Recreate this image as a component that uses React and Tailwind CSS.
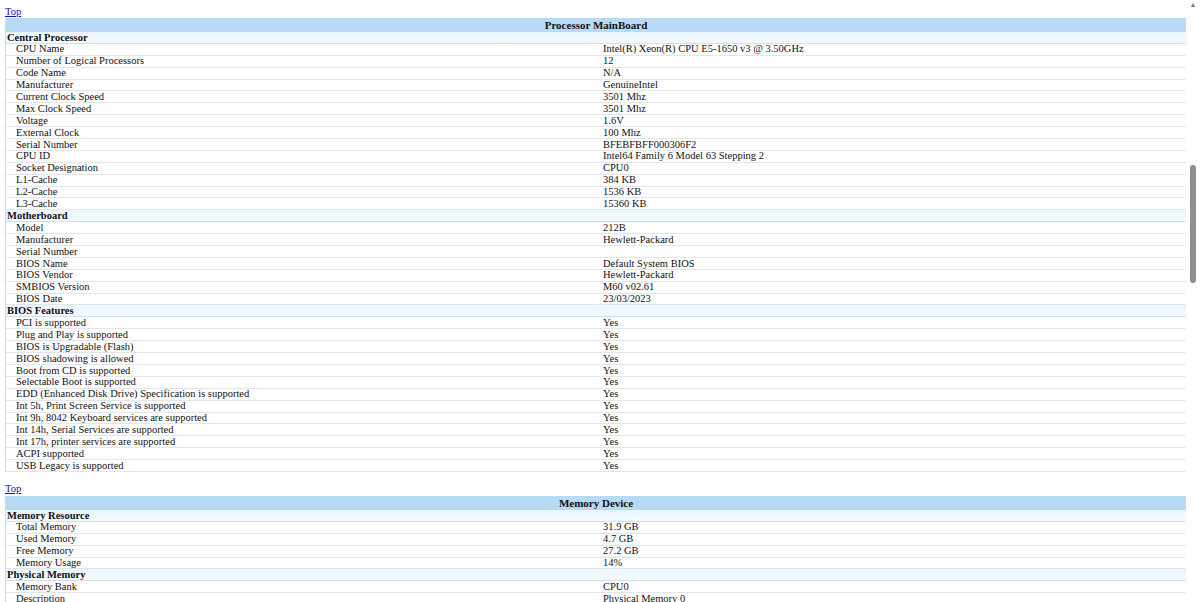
const sections1 = [
  ["Central Processor", [
    ["CPU Name","Intel(R) Xeon(R) CPU E5-1650 v3 @ 3.50GHz"],
    ["Number of Logical Processors","12"],
    ["Code Name","N/A"],
    ["Manufacturer","GenuineIntel"],
    ["Current Clock Speed","3501 Mhz"],
    ["Max Clock Speed","3501 Mhz"],
    ["Voltage","1.6V"],
    ["External Clock","100 Mhz"],
    ["Serial Number","BFEBFBFF000306F2"],
    ["CPU ID","Intel64 Family 6 Model 63 Stepping 2"],
    ["Socket Designation","CPU0"],
    ["L1-Cache","384 KB"],
    ["L2-Cache","1536 KB"],
    ["L3-Cache","15360 KB"],
  ]],
  ["Motherboard", [
    ["Model","212B"],
    ["Manufacturer","Hewlett-Packard"],
    ["Serial Number",""],
    ["BIOS Name","Default System BIOS"],
    ["BIOS Vendor","Hewlett-Packard"],
    ["SMBIOS Version","M60 v02.61"],
    ["BIOS Date","23/03/2023"],
  ]],
  ["BIOS Features", [
    ["PCI is supported","Yes"],
    ["Plug and Play is supported","Yes"],
    ["BIOS is Upgradable (Flash)","Yes"],
    ["BIOS shadowing is allowed","Yes"],
    ["Boot from CD is supported","Yes"],
    ["Selectable Boot is supported","Yes"],
    ["EDD (Enhanced Disk Drive) Specification is supported","Yes"],
    ["Int 5h, Print Screen Service is supported","Yes"],
    ["Int 9h, 8042 Keyboard services are supported","Yes"],
    ["Int 14h, Serial Services are supported","Yes"],
    ["Int 17h, printer services are supported","Yes"],
    ["ACPI supported","Yes"],
    ["USB Legacy is supported","Yes"],
  ]],
];
const sections2 = [
  ["Memory Resource", [
    ["Total Memory","31.9 GB"],
    ["Used Memory","4.7 GB"],
    ["Free Memory","27.2 GB"],
    ["Memory Usage","14%"],
  ]],
  ["Physical Memory", [
    ["Memory Bank","CPU0"],
    ["Description","Physical Memory 0"],
  ]],
];

function Block({ title, sections }) {
  return (
    <div>
      <div className="h-[18px] pl-[5px] flex items-end pb-[1px]"><a href="#" className="text-[#1a0dab] underline text-[10.5px] leading-none">Top</a></div>
      <div className="ml-[5px] w-[1181px] border-l border-[#c9dcea]">
        <div className="h-[14px] bg-[#b7dbf5] flex items-center justify-center font-bold text-[11px]">{title}</div>
        {sections.map(([s, rows]) => (
          <div key={s}>
            <div className="h-[11.9px] bg-gradient-to-b from-[#eaf4fd] to-[#f5faff] border-b border-[#cfe0ee] flex items-center pl-[1px] font-bold text-[10.5px]">{s}</div>
            {rows.map(([k, v], i) => (
              <div key={i} className="h-[11.9px] flex items-center border-b border-[#e2e6ea] text-[10.5px]">
                <div className="w-[597px] pl-[10px] whitespace-nowrap">{k}</div>
                <div className="whitespace-nowrap">{v}</div>
              </div>
            ))}
          </div>
        ))}
      </div>
    </div>
  );
}

export default function App() {
  return (
    <div className="w-[1200px] h-[602px] overflow-hidden bg-white text-[#111] relative" style={{ fontFamily: '"Liberation Serif", serif' }}>
      <Block title="Processor MainBoard" sections={sections1} />
      <div className="h-[6px]" />
      <Block title="Memory Device" sections={sections2} />
      <div className="absolute right-0 top-0 w-[14px] h-full bg-white">
        <div className="text-[7px] text-[#777] text-center leading-none mt-[2px]">▲</div>
        <div className="absolute left-[4px] top-[165px] w-[6px] h-[118px] rounded bg-[#8f8f8f]" />
      </div>
    </div>
  );
}
